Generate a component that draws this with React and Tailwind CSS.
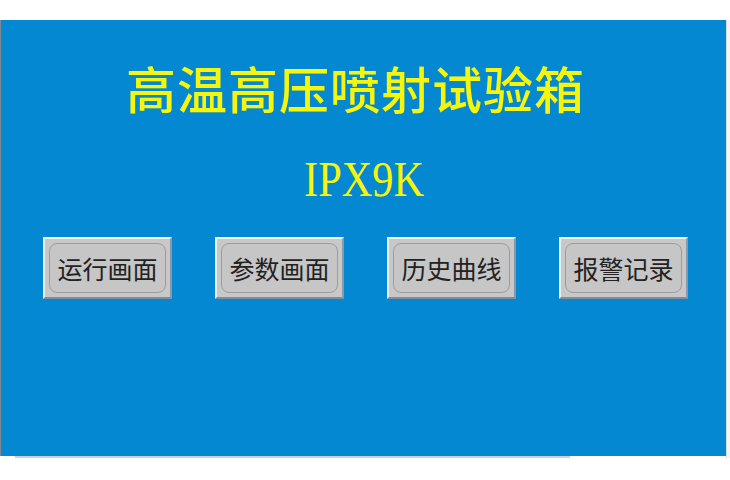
const buttons = ["运行画面", "参数画面", "历史曲线", "报警记录"]

const PanelButton = ({ label }) => (
  <button className="w-[129px] h-[62px] p-[4px] bg-[#c8c8c8] border-t-2 border-l-2 border-t-[#f4f4f4] border-l-[#eeeeee] border-b-2 border-r-2 border-b-[#7d8da0] border-r-[#8a98a8]">
    <div className="w-full h-full rounded-[8px] border border-[#9c9c9c] bg-[#c6c6c6] flex items-center justify-center text-[25px] leading-none text-[#222] font-['Noto_Sans_CJK_SC',sans-serif]">
      {label}
    </div>
  </button>
)

const App = () => {
  return (
    <div className="w-[730px] h-[480px] bg-white pt-[20px] relative overflow-hidden">
      <div className="w-[726px] h-[436px] bg-[#0588d2] border-l border-[#7a8a96] flex flex-col items-center">
        <h1 className="mt-[42px] pr-[16px] text-[50px] leading-none font-medium text-[#f6f60c] font-['Noto_Sans_CJK_SC',sans-serif] tracking-[1px]">
          高温高压喷射试验箱
        </h1>

        <div className="mt-[42px] pl-[2px] text-[51px] leading-none text-[#f6f60c] font-['Liberation_Serif',serif] scale-x-[0.83]">
          IPX9K
        </div>

        <div className="mt-[32px] pl-[4px] flex gap-[43px]">
          {buttons.map(b => <PanelButton key={b} label={b} />)}
        </div>
      </div>

      {/* bottom scroll strip */}
      <div className="ml-[15px] w-[555px] h-[2px] bg-[#c9d2da]" />
      <div className="absolute right-0 top-[20px] w-[4px] h-[438px] border-l border-[#d8dde2] bg-[#f3f5f7]" />
    </div>
  )
}

export default App
